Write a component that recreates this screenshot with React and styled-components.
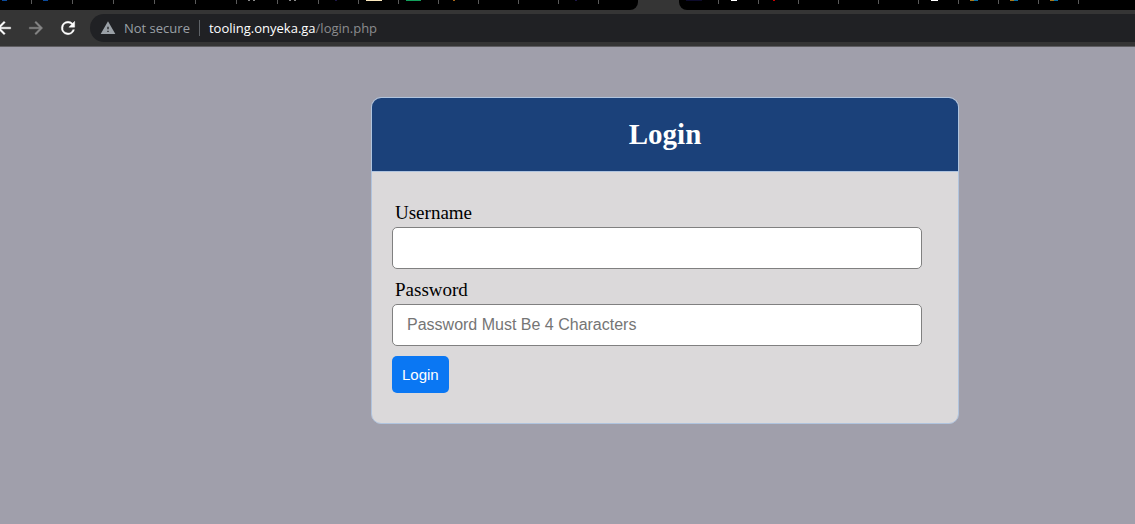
import React from "react";
import styled, { createGlobalStyle } from "styled-components";

const Global = createGlobalStyle`
  * { box-sizing: border-box; }
  html, body, #root { height: 100%; }
  body { margin: 0; background: #a09fab; font-family: "Liberation Serif", serif; color: #000; }
`;

const Screen = styled.div`
  min-height: 100%;
  display: flex;
  flex-direction: column;
`;

const TabStrip = styled.div`
  height: 10px;
  display: flex;
  background: #353535;
  overflow: hidden;
`;

const TabGroup = styled.div`
  display: flex;
  background: #000;
  flex: ${(p) => (p.$fill ? "1 0 auto" : "none")};
  border-radius: ${(p) => (p.$fill ? "0 0 0 8px" : "0 0 8px 0")};
`;

const Tab = styled.div`
  width: ${(p) => p.$w}px;
  height: 4px;
  border-right: 1px solid ${(p) => (p.$last ? "transparent" : "#5a5a5a")};
`;

const Favicon = styled.div`
  width: ${(p) => p.$w}px;
  height: 1px;
  margin-left: ${(p) => p.$x}px;
  background: ${(p) => p.$c};
`;

const ActiveTab = styled.div`
  width: 41px;
  flex: none;
`;

const Toolbar = styled.header`
  height: 37px;
  display: flex;
  align-items: center;
  padding-bottom: 1px;
  background: #353535;
  border-bottom: 1px solid #5f5e62;
`;

const NavButton = styled.button`
  width: 32px;
  height: 28px;
  padding: 0;
  border: 0;
  background: none;
  color: ${(p) => (p.$dim ? "#868686" : "#fff")};
  display: grid;
  place-items: center;
`;

const Nav = styled.nav`
  display: flex;
  margin-left: -12px;
  margin-right: 6px;
`;

const AddressBar = styled.div`
  flex: 1;
  height: 28px;
  display: flex;
  align-items: center;
  padding-left: 10px;
  border-radius: 14px 0 0 14px;
  background: #202124;
  color: #9aa0a6;
  font: 13px/20px "Open Sans", sans-serif;
  white-space: nowrap;
`;

const Security = styled.span`
  margin: 0 9px 0 8px;
`;

const Divider = styled.span`
  width: 1px;
  height: 16px;
  margin-right: 9px;
  background: #5f6368;
`;

const Host = styled.span`
  color: #fff;
  font-weight: 500;
`;

const Path = styled.span`
  color: #8b8c8e;
`;

const Page = styled.main`
  flex: 1;
  display: flex;
  justify-content: center;
  align-items: flex-start;
  padding: 50px 0 50px 195px;
`;

const Card = styled.section`
  width: 100%;
  max-width: 588px;
  border: 1px solid #b0c4de;
  border-radius: 10px;
  background: #dbd9da;
  overflow: hidden;
`;

const Title = styled.h1`
  margin: 0;
  padding: 20px;
  font-size: 29px;
  line-height: 33px;
  text-align: center;
  color: #fff;
  background: #1b417a;
  border-bottom: 1px solid #b0c4de;
`;

const Form = styled.form`
  padding: 30px 36px 30px 20px;
`;

const Field = styled.div`
  margin-bottom: 10px;
`;

const Label = styled.label`
  display: block;
  padding: 0 3px;
  margin-bottom: 3px;
  font-size: 19px;
  line-height: 22px;
`;

const Input = styled.input`
  display: block;
  width: 100%;
  height: 42px;
  padding: 0 14px;
  border: 1px solid #808080;
  border-radius: 5px;
  background: #fff;
  font: 16px "Liberation Sans", Arial, sans-serif;
  &::placeholder { color: #757575; }
`;

const Submit = styled.button`
  height: 37px;
  padding: 0 10px;
  border: 0;
  border-radius: 5px;
  background: #0a77f3;
  color: #fff;
  font: 15px "Liberation Sans", Arial, sans-serif;
  display: block;
`;

const twoDots = "linear-gradient(90deg, #888 2px, transparent 2px 5px, #888 5px)";
const drive = "linear-gradient(90deg, #a97b1b 50%, #0670a8 50%)";

const leftTabs = [
  { w: 32, x: 2, f: 5, c: "#0b4a9c" },
  { w: 41, x: 11, f: 5, c: "#0b4a9c" },
  { w: 41 },
  { w: 41 },
  { w: 41 },
  { w: 41 },
  { w: 41, x: 11, f: 7, c: twoDots },
  { w: 41, x: 11, f: 7, c: twoDots },
  { w: 40, x: 16, f: 2, c: "#1d1648" },
  { w: 40, x: 7, f: 16, c: "#fbe8bd" },
  { w: 40, x: 7, f: 15, c: "#12a05c" },
  { w: 40, x: 14, f: 2, c: "#a86518" },
  { w: 40 },
  { w: 40 },
  { w: 40, x: 16, f: 2, c: "#1d1648" },
  { w: 39, last: true },
];

const rightTabs = [
  { w: 40, x: 7, f: 16, c: "#0d0b2c" },
  { w: 40, x: 12, f: 6, c: "#fff" },
  { w: 40, x: 14, f: 2, c: "#c00" },
  { w: 40 },
  { w: 40 },
  { w: 40 },
  { w: 40, x: 12, f: 7, c: "#fff" },
  { w: 40, x: 11, f: 8, c: drive },
  { w: 40, x: 11, f: 8, c: drive },
  { w: 40, x: 11, f: 8, c: drive },
];

const Tabs = ({ tabs, fill }) => (
  <TabGroup $fill={fill}>
    {tabs.map((t, i) => (
      <Tab key={i} $w={t.w} $last={t.last}>
        {t.f && <Favicon $w={t.f} $x={t.x} $c={t.c} />}
      </Tab>
    ))}
  </TabGroup>
);

const Icon = ({ d, size = 20, bold = 0 }) => (
  <svg
    width={size}
    height={size}
    viewBox="0 0 24 24"
    fill="currentColor"
    stroke="currentColor"
    strokeWidth={bold}
    aria-hidden="true"
  >
    <path d={d} />
  </svg>
);

export default function App() {
  return (
    <Screen>
      <Global />
      <TabStrip>
        <Tabs tabs={leftTabs} />
        <ActiveTab />
        <Tabs tabs={rightTabs} fill />
      </TabStrip>
      <Toolbar>
        <Nav>
          <NavButton type="button" aria-label="Back">
            <Icon bold={0.5} d="M20 11H7.83l5.59-5.59L12 4l-8 8 8 8 1.41-1.41L7.83 13H20v-2z" />
          </NavButton>
          <NavButton type="button" aria-label="Forward" $dim>
            <Icon bold={0.5} d="M12 4l-1.41 1.41L16.17 11H4v2h12.17l-5.58 5.59L12 20l8-8z" />
          </NavButton>
          <NavButton type="button" aria-label="Reload">
            <Icon bold={0.5} d="M17.65 6.35A7.96 7.96 0 0 0 12 4a8 8 0 1 0 7.73 10h-2.08A6 6 0 1 1 12 6c1.66 0 3.14.69 4.22 1.78L13 11h7V4l-2.35 2.35z" />
          </NavButton>
        </Nav>
        <AddressBar>
          <Icon size={16} d="M1 21h22L12 2 1 21zm12-3h-2v-2h2v2zm0-4h-2v-4h2v4z" />
          <Security>Not secure</Security>
          <Divider />
          <Host>tooling.onyeka.ga</Host>
          <Path>/login.php</Path>
        </AddressBar>
      </Toolbar>
      <Page>
        <Card>
          <Title>Login</Title>
          <Form onSubmit={(e) => e.preventDefault()}>
            <Field>
              <Label htmlFor="username">Username</Label>
              <Input id="username" type="text" />
            </Field>
            <Field>
              <Label htmlFor="password">Password</Label>
              <Input id="password" type="password" placeholder="Password Must Be 4 Characters" />
            </Field>
            <Submit type="submit">Login</Submit>
          </Form>
        </Card>
      </Page>
    </Screen>
  );
}
